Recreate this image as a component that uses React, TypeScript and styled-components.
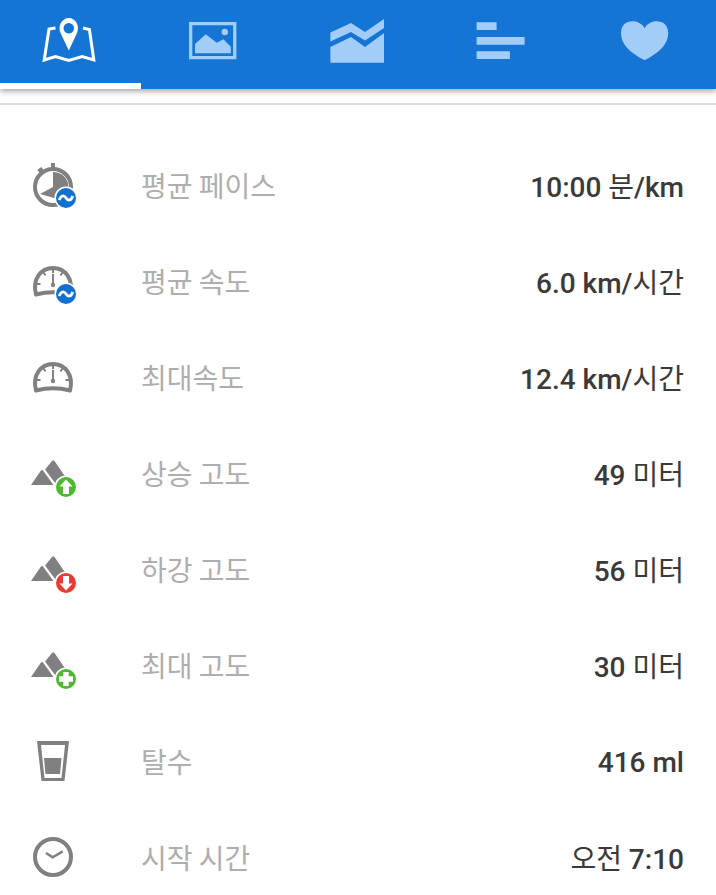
import React from 'react';
import styled, { createGlobalStyle } from 'styled-components';

const Global = createGlobalStyle`
  html, body { margin: 0; padding: 0; background: #fff; }
  body { width: 716px; height: 895px; overflow: hidden; font-family: Roboto, "Noto Sans CJK KR", sans-serif; }
`;
const Page = styled.div`width: 716px; height: 895px; overflow: hidden; background: #fff;`;
const TabBar = styled.div`
  display: flex; height: 89px; background: #1575d4;
  box-shadow: 0 2px 6px rgba(0,0,0,.38);
  position: relative;
`;
const Tab = styled.div<{ $active?: boolean }>`
  flex: 1 1 0; display: flex; justify-content: center; align-items: flex-start;
  padding-top: 14px; box-sizing: border-box;
  border-bottom: 6px solid ${p => (p.$active ? '#fff' : 'transparent')};
  &:first-child { flex: 0 0 141px; }
  color: ${p => (p.$active ? '#fff' : '#a1cdf8')};
`;
const TabIcon = styled.svg`display: block; width: 60px; height: 54px;`;
const Rule = styled.div`height: 2px; background: #dedede; margin-top: 14px;`;
const List = styled.div`padding-top: 33px;`;
const Row = styled.div`
  height: 96px; display: flex; align-items: center; padding: 0 32px 0 28px;
`;
const IconBox = styled.svg`width: 52px; height: 56px; flex: none; display: block;`;
const Label = styled.div`
  margin-left: 61px; flex: 1; font: 400 28px/40px "Noto Sans CJK KR", sans-serif; color: #aeaeae;
  margin-top: -3px;
`;
const Value = styled.div`
  font: 500 28px/40px Roboto, "Noto Sans CJK KR", sans-serif; color: #3a3a3a;
  margin-top: 1px;
`;
const Hangul = styled.span`font-weight: 400; font-family: "Noto Sans CJK KR", sans-serif;`;

const G = '#808080';

function Badge({ color, kind, cy = 40 }: { color: string; kind: 'wave' | 'up' | 'down' | 'plus'; cy?: number }) {
  return (
    <g transform={`translate(38 ${cy})`}>
      <circle r="11.500" fill="#fff" />
      <circle r="10" fill={color} />
      {kind === 'wave' && <path d="M-6.800 2C-5 -3 -2 -3 0 0C2 3 5 3 6.800 -2" fill="none" stroke="#fff" strokeWidth="2.800" />}
      {kind === 'up' && <path d="M0 -7.500L6.500 -0.500H3V7H-3V-0.500H-6.500Z" fill="#fff" />}
      {kind === 'down' && <path d="M0 7.500L6.500 0.500H3V-7H-3V0.500H-6.500Z" fill="#fff" />}
      {kind === 'plus' && <path d="M-2.700 -7H2.700V-2.700H7V2.700H2.700V7H-2.700V2.700H-7V-2.700H-2.700Z" fill="#fff" />}
    </g>
  );
}

const Stopwatch = () => (
  <IconBox viewBox="0 0 52 56">
    <rect x="23" y="5" width="4" height="5" fill={G} />
    <rect x="10" y="10" width="5" height="4" fill={G} transform="rotate(-35 12.500 12)" />
    <circle cx="25" cy="29" r="18" fill="none" stroke={G} strokeWidth="4" />
    <path d="M25 29L25 14A15 15 0 0 1 33 42L12 36Z" fill={G} />
    <Badge color="#1270d0" kind="wave" />
  </IconBox>
);
const Gauge = ({ badge }: { badge?: boolean }) => (
  <IconBox viewBox="0 0 52 56">
    <path d="M8 40.500C4 25 13 14 25 14C37 14 46 25 42 40.500C31 37.500 19 37.500 8 40.500Z" fill="none" stroke={G} strokeWidth="4" strokeLinejoin="round" />
    <path d="M25 15v4M15.500 18.500l2 3M34.500 18.500l-2 3M8.500 30h4M41.500 30h-4" stroke={G} strokeWidth="2" />
    <path d="M25 20v10" stroke={G} strokeWidth="2" />
    <circle cx="25" cy="31" r="2.200" fill={G} />
    {badge && <Badge color="#1270d0" kind="wave" />}
  </IconBox>
);
const Mountain = ({ color, kind }: { color: string; kind: 'up' | 'down' | 'plus' }) => (
  <IconBox viewBox="0 0 52 56">
    <path d="M3 39L13 24.500Q14 23.500 15 24.500L25.500 39Z" fill={G} />
    <path d="M17 23.500L24 15Q25.300 13.500 26.500 15L39.500 34L31 38.500L27.500 37.500Z" fill={G} />
    <Badge color={color} kind={kind} cy={41} />
  </IconBox>
);
const Glass = () => (
  <IconBox viewBox="0 0 52 56">
    <path d="M9 7H41L36.500 47H13.500Z M13 11L16.500 44H33.500L37 11Z" fill={G} fillRule="evenodd" />
    <path d="M16 24H33.500L32 40H17.500Z" fill={G} />
  </IconBox>
);
const Clock = () => (
  <IconBox viewBox="0 0 52 56">
    <circle cx="25" cy="27" r="18" fill="none" stroke={G} strokeWidth="4" />
    <path d="M18 23L24.700 27.300L34.700 21.300" fill="none" stroke={G} strokeWidth="2.600" />
  </IconBox>
);

const rows = [
  { icon: <Stopwatch />, label: '평균 페이스', value: '10:00 분/km' },
  { icon: <Gauge badge />, label: '평균 속도', value: '6.0 km/시간' },
  { icon: <Gauge />, label: '최대속도', value: '12.4 km/시간' },
  { icon: <Mountain color="#4cb92f" kind="up" />, label: '상승 고도', value: '49 미터' },
  { icon: <Mountain color="#ee3a2e" kind="down" />, label: '하강 고도', value: '56 미터' },
  { icon: <Mountain color="#4cb92f" kind="plus" />, label: '최대 고도', value: '30 미터' },
  { icon: <Glass />, label: '탈수', value: '416 ml' },
  { icon: <Clock />, label: '시작 시간', value: '오전 7:10' },
];

const renderValue = (v: string) =>
  v.split(/([\uac00-\ud7a3]+)/).map((part, i) =>
    /[\uac00-\ud7a3]/.test(part) ? <Hangul key={i}>{part}</Hangul> : part
  );

export default function App() {
  return (
    <Page>
      <Global />
      <TabBar>
        <Tab $active>
          <TabIcon viewBox="0 0 60 54">
            <path d="M14.500 14L8 15L3.200 46L14.500 42.500L27.800 46.500L41.200 42.500L52.800 46L48.400 15.500L42 14" fill="none" stroke="currentColor" strokeWidth="3" />
            <path fillRule="evenodd" fill="currentColor" d="M27.800 36.500L20 20C16 12 21 4 27.800 4C34.600 4 39.600 12 35.600 20Z M27.800 9A5.300 5.300 0 1 0 27.800 19.600A5.300 5.300 0 1 0 27.800 9Z" />
          </TabIcon>
        </Tab>
        <Tab>
          <TabIcon viewBox="0 0 60 54">
            <path fillRule="evenodd" fill="currentColor" d="M6 8H53.400V45.300H6Z M9.300 11.300V42H50.100V11.300Z" />
            <circle cx="41.800" cy="18" r="3.200" fill="currentColor" />
            <path fill="currentColor" d="M12 39.300V30L22.800 20.300L33.800 28.700L40.400 25.300L47.800 32.700V39.300Z" />
          </TabIcon>
        </Tab>
        <Tab>
          <TabIcon viewBox="0 0 60 54">
            <path fill="currentColor" d="M3.400 18.500L24 9L38 18L57 5V14L38 26.500L24 18L3.400 27.500Z" />
            <path fill="currentColor" d="M3.400 33L24 23L38 33L57 19V48.700H3.400Z" />
          </TabIcon>
        </Tab>
        <Tab>
          <TabIcon viewBox="0 0 60 54">
            <path fill="currentColor" d="M6.600 8.300H26.600V16H6.600Z M6.600 23H54.600V30.700H6.600Z M6.600 37.300H39.900V45H6.600Z" />
          </TabIcon>
        </Tab>
        <Tab>
          <TabIcon viewBox="0 0 60 54">
            <path fill="currentColor" d="M30.600 46.300C15 38 7 30 7 19C7 11 12.500 7.300 18.500 7.300C23.500 7.300 28.600 10 30.600 14.300C32.600 10 37.700 7.300 42.700 7.300C48.700 7.300 54.200 11 54.200 19C54.200 30 46.200 38 30.600 46.300Z" />
          </TabIcon>
        </Tab>
      </TabBar>
      <Rule />
      <List>
        {rows.map(r => (
          <Row key={r.label}>
            {r.icon}
            <Label>{r.label}</Label>
            <Value>{renderValue(r.value)}</Value>
          </Row>
        ))}
      </List>
    </Page>
  );
}
